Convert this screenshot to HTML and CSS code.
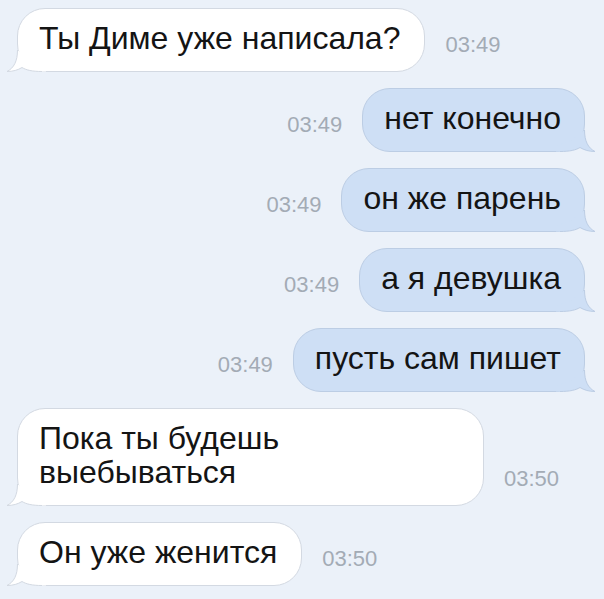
FILE: index.html
```html
<!DOCTYPE html>
<html lang="ru">
<head>
    <meta charset="UTF-8">
    <meta name="viewport" content="width=device-width, initial-scale=1.0">
    <title>Переписка</title>
    <link rel="stylesheet" href="styles.css">
</head>
<body>

<svg class="defs" width="0" height="0" aria-hidden="true">
    <symbol id="tail" viewBox="0 0 40 24">
        <path stroke="none" d="M11.5 2 C11.5 13 8 20 1 23.5 C7 23.5 12 22 16 19.5 C20 22 26 23.5 40 23.5 L40 18 L24 12 L15 5 Z"/>
        <path fill="none" d="M11.5 2 C11.5 13 8 20 1 23.5 C7 23.5 12 22 16 19.5 C20 22 26 23.5 36 23.5"/>
    </symbol>
</svg>

<div class="chat">
    <div class="row in">
        <div class="bubble">Ты Диме уже написала?<svg class="tail"><use href="#tail"/></svg></div>
        <span class="time">03:49</span>
    </div>

    <div class="row out">
        <span class="time">03:49</span>
        <div class="bubble">нет конечно<svg class="tail"><use href="#tail"/></svg></div>
    </div>

    <div class="row out">
        <span class="time">03:49</span>
        <div class="bubble">он же парень<svg class="tail"><use href="#tail"/></svg></div>
    </div>

    <div class="row out">
        <span class="time">03:49</span>
        <div class="bubble">а я девушка<svg class="tail"><use href="#tail"/></svg></div>
    </div>

    <div class="row out">
        <span class="time">03:49</span>
        <div class="bubble">пусть сам пишет<svg class="tail"><use href="#tail"/></svg></div>
    </div>

    <div class="row in">
        <div class="bubble">Пока ты будешь выебываться<svg class="tail"><use href="#tail"/></svg></div>
        <span class="time">03:50</span>
    </div>

    <div class="row in">
        <div class="bubble">Он уже женится<svg class="tail"><use href="#tail"/></svg></div>
        <span class="time">03:50</span>
    </div>
</div>

</body>
</html>
```

FILE: styles.css
```css
body {
    margin: 0;
    background-color: #EBF1F9;
    font-family: 'Liberation Sans', Arial, sans-serif;
    color: #141414;
}
.defs {
    position: absolute;
}
.chat {
    display: flex;
    flex-direction: column;
    gap: 16px;
    padding: 8px 19px 0 17px;
}
.row {
    display: flex;
    align-items: flex-end;
    gap: 20px;
}
.row.out {
    justify-content: flex-end;
}
.bubble {
    position: relative;
    box-sizing: border-box;
    max-width: 467px;
    padding: 12px 24px 16px 21px;
    border: 1px solid #D3D9E2;
    border-radius: 28px;
    background-color: #FFFFFF;
    font-size: 32px;
    line-height: 34px;
}
.out .bubble {
    padding: 12px 23px 16px 21px;
    background-color: #CEDFF5;
    border-color: #BCCDE4;
}
.tail {
    position: absolute;
    bottom: -1px;
    left: -12px;
    width: 40px;
    height: 24px;
    fill: #FFFFFF;
    stroke: #D3D9E2;
    stroke-width: 1;
}
.out .tail {
    left: auto;
    right: -12px;
    transform: scaleX(-1);
    fill: #CEDFF5;
    stroke: #BCCDE4;
}
.time {
    margin-bottom: 16px;
    font-size: 22px;
    line-height: 22px;
    color: #A3ABB5;
}
```
